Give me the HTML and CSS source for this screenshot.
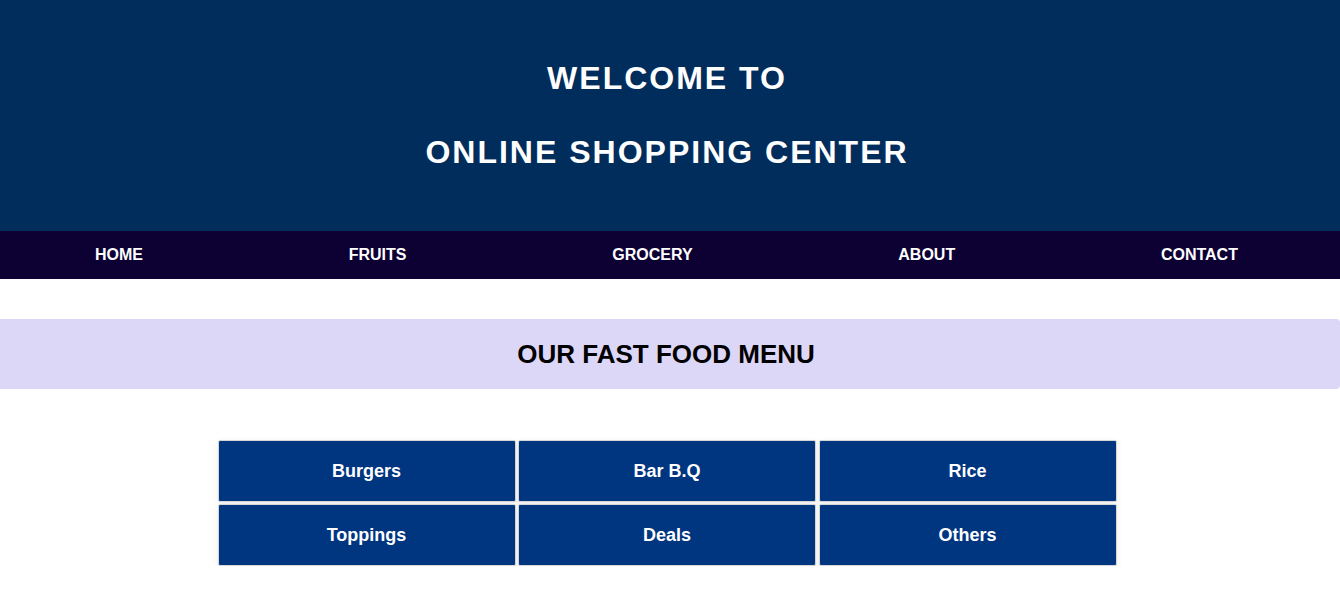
FILE: index.html
```html
<!DOCTYPE html>
<html lang="en">
<head>
<meta charset="utf-8">
<title>Online Shopping Center</title>
<link rel="stylesheet" href="styles.css">
</head>
<body>
<header class="hero">
  <h1 class="hero-title">
    <span class="hero-line">WELCOME TO</span>
    <span class="hero-line">ONLINE SHOPPING CENTER</span>
  </h1>
</header>
<nav class="nav">
  <a class="nav-link" href="#">HOME</a>
  <a class="nav-link" href="#">FRUITS</a>
  <a class="nav-link" href="#">GROCERY</a>
  <a class="nav-link" href="#">ABOUT</a>
  <a class="nav-link" href="#">CONTACT</a>
</nav>
<main class="content">
  <h2 class="band">OUR FAST FOOD MENU</h2>
  <div class="menu-wrap">
    <div class="menu-grid">
      <a class="menu-item" href="#">Burgers</a>
      <a class="menu-item" href="#">Bar B.Q</a>
      <a class="menu-item" href="#">Rice</a>
      <a class="menu-item" href="#">Toppings</a>
      <a class="menu-item" href="#">Deals</a>
      <a class="menu-item" href="#">Others</a>
    </div>
  </div>
</main>
</body>
</html>
```
FILE: styles.css
```css
* { box-sizing: border-box; }

html, body {
  margin: 0;
  padding: 0;
  background: #ffffff;
  font-family: "Liberation Sans", Arial, sans-serif;
}

.hero {
  background: #012d5c;
  height: 231px;
  padding: 60px 6px 0 0;
}

.hero-title {
  margin: 0;
  display: flex;
  flex-direction: column;
  align-items: center;
  gap: 37px;
  color: #ffffff;
  font-size: 32px;
  font-weight: bold;
  letter-spacing: 2px;
  line-height: 37px;
}

.hero-line { display: block; }

.nav {
  background: #0d0033;
  height: 48px;
  display: flex;
  align-items: center;
  justify-content: space-between;
  padding: 0 102px 0 95px;
}

.nav-link {
  color: #ffffff;
  text-decoration: none;
  font-size: 16px;
  font-weight: bold;
  line-height: 18px;
}

.content {
  padding-top: 40px;
}

.band {
  margin: 0;
  height: 70px;
  padding-right: 8px;
  background: #dcd6f7;
  border-radius: 0 4px 4px 0;
  display: flex;
  align-items: center;
  justify-content: center;
  color: #000000;
  font-size: 26px;
  font-weight: bold;
}

.menu-wrap {
  display: flex;
  justify-content: center;
  padding: 51px 6px 0 0;
}

.menu-grid {
  display: grid;
  grid-template-columns: repeat(3, 298px);
  grid-auto-rows: 61.5px;
  gap: 2.5px;
}

.menu-item {
  display: flex;
  align-items: center;
  justify-content: center;
  padding-top: 2px;
  background: #003580;
  border: 1px solid #d6d6d6;
  border-radius: 2px;
  box-shadow: 0 2px 6px rgba(0, 0, 0, 0.08);
  color: #ffffff;
  text-decoration: none;
  font-size: 18px;
  font-weight: bold;
}
```
